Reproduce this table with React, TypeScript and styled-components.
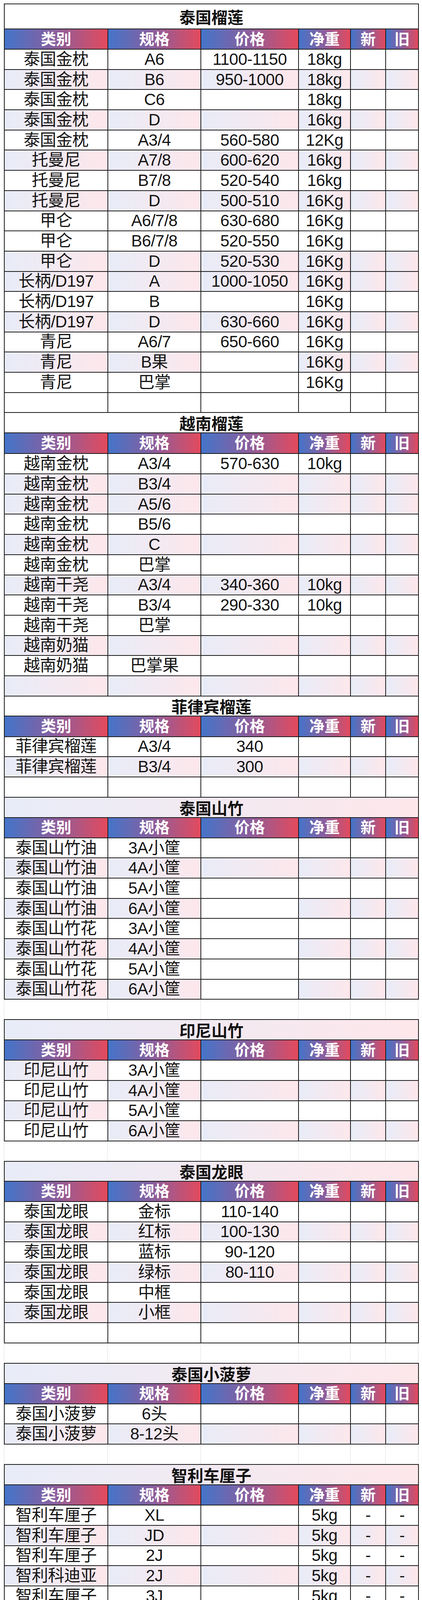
import React from 'react';
import styled, { createGlobalStyle, css } from 'styled-components';

const INK = '#1c1c1c';
const GRID = '#dedede';
const COLS = '265px 238px 250px 133px 90px 84px';

const soft = css`
  background: linear-gradient(to right, #e8ecf8, #fde7eb);
`;

const GlobalStyle = createGlobalStyle`
  html, body {
    margin: 0;
    padding: 0;
    background: #fff;
  }
  body {
    font-family: "Liberation Sans", "Noto Sans CJK SC", sans-serif;
    color: #141414;
  }
`;

const Sheet = styled.div`
  display: flex;
  flex-direction: column;
  padding: 9px 8px 0 10px;
`;

const Block = styled.section<{ $capped: boolean }>`
  display: grid;
  grid-template-columns: ${COLS};
  border-left: 2px solid ${INK};
  ${(p) => p.$capped && `border-top: 2px solid ${INK};`}
`;

const boxed = css`
  box-sizing: border-box;
  border-right: 2px solid ${INK};
  border-bottom: 2px solid ${INK};
  display: flex;
  align-items: center;
  justify-content: center;
  white-space: nowrap;
  overflow: hidden;
`;

const Title = styled.div<{ $h: number; $soft: boolean }>`
  ${boxed}
  grid-column: 1 / -1;
  height: ${(p) => p.$h}px;
  font-size: 41px;
  font-weight: 700;
  color: #111;
  ${(p) => (p.$soft ? soft : 'background: #fff;')}
`;

const Head = styled.div<{ $h: number }>`
  ${boxed}
  height: ${(p) => p.$h}px;
  flex-direction: column;
  background: linear-gradient(to right, #4474c9, #8c5e9c 50%, #e34a5d);
  color: #fff;
  font-size: 39px;
  font-weight: 700;
  line-height: 55px;
`;

const Cell = styled.div<{ $h: number; $soft: boolean }>`
  ${boxed}
  height: ${(p) => p.$h}px;
  font-size: 42px;
  line-height: 1;
  letter-spacing: -0.5px;
  ${(p) => (p.$soft ? soft : 'background: #fff;')}
`;

const Gap = styled.div<{ $h: number }>`
  display: grid;
  grid-template-columns: ${COLS};
  height: ${(p) => p.$h}px;
  border-left: 1px solid ${GRID};
`;

const GapCell = styled.div`
  border-right: 1px solid ${GRID};
`;

type Row = { c: string[]; s: string; h?: number };
type Sec = {
  title: string;
  soft?: boolean;
  th: number;
  hh: number;
  tall?: boolean;
  rh: number;
  rows: Row[];
  gap?: number;
};

const r = (cells: string, s = '0', h?: number): Row => ({
  c: cells.split('|'),
  s: s === '1' ? '111111' : s === '0' ? '000000' : s,
  h,
});

const sections: Sec[] = [
  {
    title: '泰国榴莲',
    th: 64,
    hh: 52,
    rh: 51.7,
    rows: [
      r('泰国金枕|A6|1100-1150|18kg'),
      r('泰国金枕|B6|950-1000|18kg', '1'),
      r('泰国金枕|C6||18kg'),
      r('泰国金枕|D||16kg', '1'),
      r('泰国金枕|A3/4|560-580|12Kg'),
      r('托曼尼|A7/8|600-620|16kg', '1'),
      r('托曼尼|B7/8|520-540|16kg'),
      r('托曼尼|D|500-510|16Kg', '1'),
      r('甲仑|A6/7/8|630-680|16Kg'),
      r('甲仑|B6/7/8|520-550|16Kg'),
      r('甲仑|D|520-530|16Kg', '1'),
      r('长柄/D197|A|1000-1050|16Kg', '1'),
      r('长柄/D197|B||16Kg'),
      r('长柄/D197|D|630-660|16Kg', '1'),
      r('青尼|A6/7|650-660|16Kg'),
      r('青尼|B果||16Kg', '110111'),
      r('青尼|巴掌||16Kg'),
      r(''),
    ],
  },
  {
    title: '越南榴莲',
    th: 52,
    hh: 53,
    rh: 51.7,
    rows: [
      r('越南金枕|A3/4|570-630|10kg'),
      r('越南金枕|B3/4', '1'),
      r('越南金枕|A5/6', '1'),
      r('越南金枕|B5/6'),
      r('越南金枕|C', '1'),
      r('越南金枕|巴掌'),
      r('越南干尧|A3/4|340-360|10kg', '1'),
      r('越南干尧|B3/4|290-330|10kg'),
      r('越南干尧|巴掌'),
      r('越南奶猫', '1'),
      r('越南奶猫|巴掌果'),
      r('', '1'),
    ],
  },
  {
    title: '菲律宾榴莲',
    th: 51,
    hh: 53,
    rh: 51.7,
    rows: [r('菲律宾榴莲|A3/4|340'), r('菲律宾榴莲|B3/4|300', '1'), r('')],
  },
  {
    title: '泰国山竹',
    soft: true,
    th: 52,
    hh: 52,
    rh: 51.7,
    gap: 50,
    rows: [
      r('泰国山竹油|3A小筐'),
      r('泰国山竹油|4A小筐', '1'),
      r('泰国山竹油|5A小筐'),
      r('泰国山竹油|6A小筐', '110111'),
      r('泰国山竹花|3A小筐'),
      r('泰国山竹花|4A小筐', '110111'),
      r('泰国山竹花|5A小筐'),
      r('泰国山竹花|6A小筐', '110111'),
    ],
  },
  {
    title: '印尼山竹',
    soft: true,
    th: 52,
    hh: 52,
    rh: 51.7,
    gap: 50,
    rows: [
      r('印尼山竹|3A小筐', '100000'),
      r('印尼山竹|4A小筐', '011111'),
      r('印尼山竹|5A小筐', '100000'),
      r('印尼山竹|6A小筐', '011111'),
    ],
  },
  {
    title: '泰国龙眼',
    soft: true,
    th: 51,
    hh: 52,
    rh: 51.7,
    gap: 50,
    rows: [
      r('泰国龙眼|金标|110-140'),
      r('泰国龙眼|红标|100-130', '1'),
      r('泰国龙眼|蓝标|90-120'),
      r('泰国龙眼|绿标|80-110', '1'),
      r('泰国龙眼|中框'),
      r('泰国龙眼|小框', '1'),
      r(''),
    ],
  },
  {
    title: '泰国小菠萝',
    soft: true,
    th: 52,
    hh: 52,
    rh: 51.7,
    gap: 50,
    rows: [r('泰国小菠萝|6头'), r('泰国小菠萝|8-12头', '1')],
  },
  {
    title: '智利车厘子',
    soft: true,
    th: 52,
    hh: 52,
    rh: 51.7,
    gap: 56,
    rows: [
      r('智利车厘子|XL||5kg|-|-'),
      r('智利车厘子|JD||5kg|-|-', '1'),
      r('智利车厘子|2J||5kg|-|-'),
      r('智利科迪亚|2J||5kg|-|-', '1'),
      r('智利车厘子|3J||5kg|-|-'),
      r('智利科迪亚|3J||5kg|-|-', '0', 56.5),
      r('智利科迪亚|4J(2)||5kg|-|-', '1', 56.5),
      r('智利拉宾斯|4J(2)||5kg|-|-', '0', 56.5),
      r('', '1', 56.5),
    ],
  },
  {
    title: '云南蓝莓',
    th: 57,
    hh: 114,
    tall: true,
    rh: 56.9,
    gap: 55,
    rows: [
      r('L11|特大果22+|58-60|1kg|-|-', '1'),
      r('L11|大果18+|50-53|1kg|-|-', '101111'),
      r('L11|中果15+|40-36|1kg|-|-', '110100'),
      r('L11|小果12+|20-28|1kg|-|-', '000100'),
      r('L25|特大果22+|65-68|1kg|-|-', '000100'),
      r('L25|大果18+|58-60|1kg|-|-', '000100'),
      r('L25|中果15+|42-45|1kg|-|-', '011111'),
      r('L25|小果12+|32-30|1kg|-|-', '000100'),
    ],
  },
  {
    title: '菠萝蜜',
    th: 57,
    hh: 115,
    tall: true,
    rh: 56.9,
    rows: [
      r('菠萝蜜A|大果|27-28|1kg|-|-', '101111'),
      r('菠萝蜜A|中果|24-25|1kg|-|-', '110111'),
      r('菠萝蜜A|小果|21-22|1kg|-|-', '100100'),
      r('菠萝蜜B|大果|21-22|1kg|-|-', '101100'),
      r('菠萝蜜B|中果|18-19|1kg|-|-', '110100'),
      r('菠萝蜜B|小果|15-16|1kg|-|-', '100111'),
      r('印尼红A|大果|31-32|1kg|-|-', '000111'),
      r('印尼红A|中果|27-28|1kg|-|-', '011111'),
      r('印尼红A|小果|24-25|1kg|-|-', '001100'),
      r('印尼红B|大果|27-28|1kg|-|-', '000100'),
      r('印尼红B|中果|24-25|1kg|-|-', '010100'),
      r('印尼红B|小果|21-22|1kg|-|-', '000111'),
    ],
  },
];

const HEAD = ['类别', '规格', '价格', '净重', '新', '旧'];

function HeaderRow({ h, tall }: { h: number; tall?: boolean }) {
  return (
    <>
      {HEAD.map((label, i) => (
        <Head key={label} $h={h}>
          {tall && i >= 4 ? (
            <>
              <span>{label}</span>
              <span>柜</span>
            </>
          ) : (
            label
          )}
        </Head>
      ))}
    </>
  );
}

function Section({ sec, capped }: { sec: Sec; capped: boolean }) {
  return (
    <Block $capped={capped}>
      <Title $h={sec.th} $soft={!!sec.soft}>
        {sec.title}
      </Title>
      <HeaderRow h={sec.hh} tall={sec.tall} />
      {sec.rows.map((row, ri) =>
        HEAD.map((_, ci) => (
          <Cell key={`${ri}-${ci}`} $h={row.h ?? sec.rh} $soft={row.s[ci] === '1'}>
            {row.c[ci] ?? ''}
          </Cell>
        ))
      )}
    </Block>
  );
}

export default function App() {
  return (
    <>
      <GlobalStyle />
      <Sheet>
        {sections.map((sec, i) => (
          <React.Fragment key={sec.title}>
            <Section sec={sec} capped={i === 0 || !!sections[i - 1].gap} />
            {sec.gap && (
              <Gap $h={sec.gap}>
                {HEAD.map((h) => (
                  <GapCell key={h} />
                ))}
              </Gap>
            )}
          </React.Fragment>
        ))}
      </Sheet>
    </>
  );
}
